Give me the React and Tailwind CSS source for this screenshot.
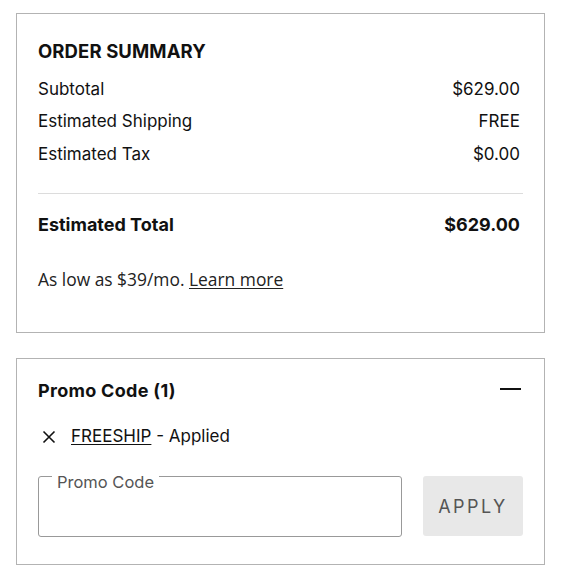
export default function App() {
  return (
    <div className="min-h-screen bg-white pt-[13px] pl-4 w-[565px]" style={{ fontFamily: 'Inter, "Liberation Sans", sans-serif' }}>
      {/* order summary */}
      <div className="w-[529px] h-[320px] border border-[#b3b3b3] pl-[21px] pr-[24px] pt-[25px] text-[#111]">
        <h2 className="text-[18.5px] font-bold leading-[24px] tracking-[0.1px]">ORDER SUMMARY</h2>
        <div className="mt-[10px] flex flex-col text-[17px]">
          <div className="flex justify-between h-[33px] items-center"><span>Subtotal</span><span>$629.00</span></div>
          <div className="flex justify-between h-[32px] items-center"><span>Estimated Shipping</span><span>FREE</span></div>
          <div className="flex justify-between h-[33px] items-center"><span>Estimated Tax</span><span>$0.00</span></div>
        </div>
        <div className="mt-[22px] border-t border-[#dcdcdc] mr-[-3px]" />
        <div className="flex justify-between mt-[19px] text-[18px] font-bold leading-[24px]">
          <span>Estimated Total</span><span>$629.00</span>
        </div>
        <p className="mt-[30px] text-[17.4px] leading-[24px] text-[#222]" style={{ fontFamily: '"Open Sans", "Noto Sans", sans-serif' }}>
          As low as $39/mo. <a className="underline underline-offset-2">Learn more</a>
        </p>
      </div>

      {/* promo code */}
      <div className="mt-[25px] w-[529px] h-[207px] border border-[#b3b3b3] pl-[21px] pr-[21px] pt-[19px] text-[#111]">
        <div className="flex justify-between items-center h-[24px]">
          <span className="text-[18px] font-bold tracking-[0.3px]">Promo Code (1)</span>
          <span className="block w-[21px] h-[2px] bg-[#111] mr-[2px] mt-[-2px]" />
        </div>
        <div className="flex items-center mt-[23px] h-[24px] text-[17px]">
          <svg width="14" height="14" viewBox="0 0 14 14" className="ml-[4px] mr-[15px]">
            <path d="M1.5 1.5 L12.5 12.5 M12.5 1.5 L1.5 12.5" stroke="#111" strokeWidth="1.6" />
          </svg>
          <a className="underline underline-offset-2">FREESHIP</a>
          <span>&nbsp;- Applied</span>
        </div>
        <div className="flex mt-[27px] gap-[21px]">
          <div className="relative w-[364px] h-[61px] border border-[#999] rounded-[3px]">
            <span className="absolute left-[13px] top-[-4px] bg-white px-[5px] text-[16.5px] text-[#555] leading-[18px]">Promo Code</span>
          </div>
          <button className="w-[100px] h-[60px] bg-[#e8e8e8] rounded-[3px] text-[18px] text-[#555] tracking-[2.5px]">APPLY</button>
        </div>
      </div>
    </div>
  );
}
